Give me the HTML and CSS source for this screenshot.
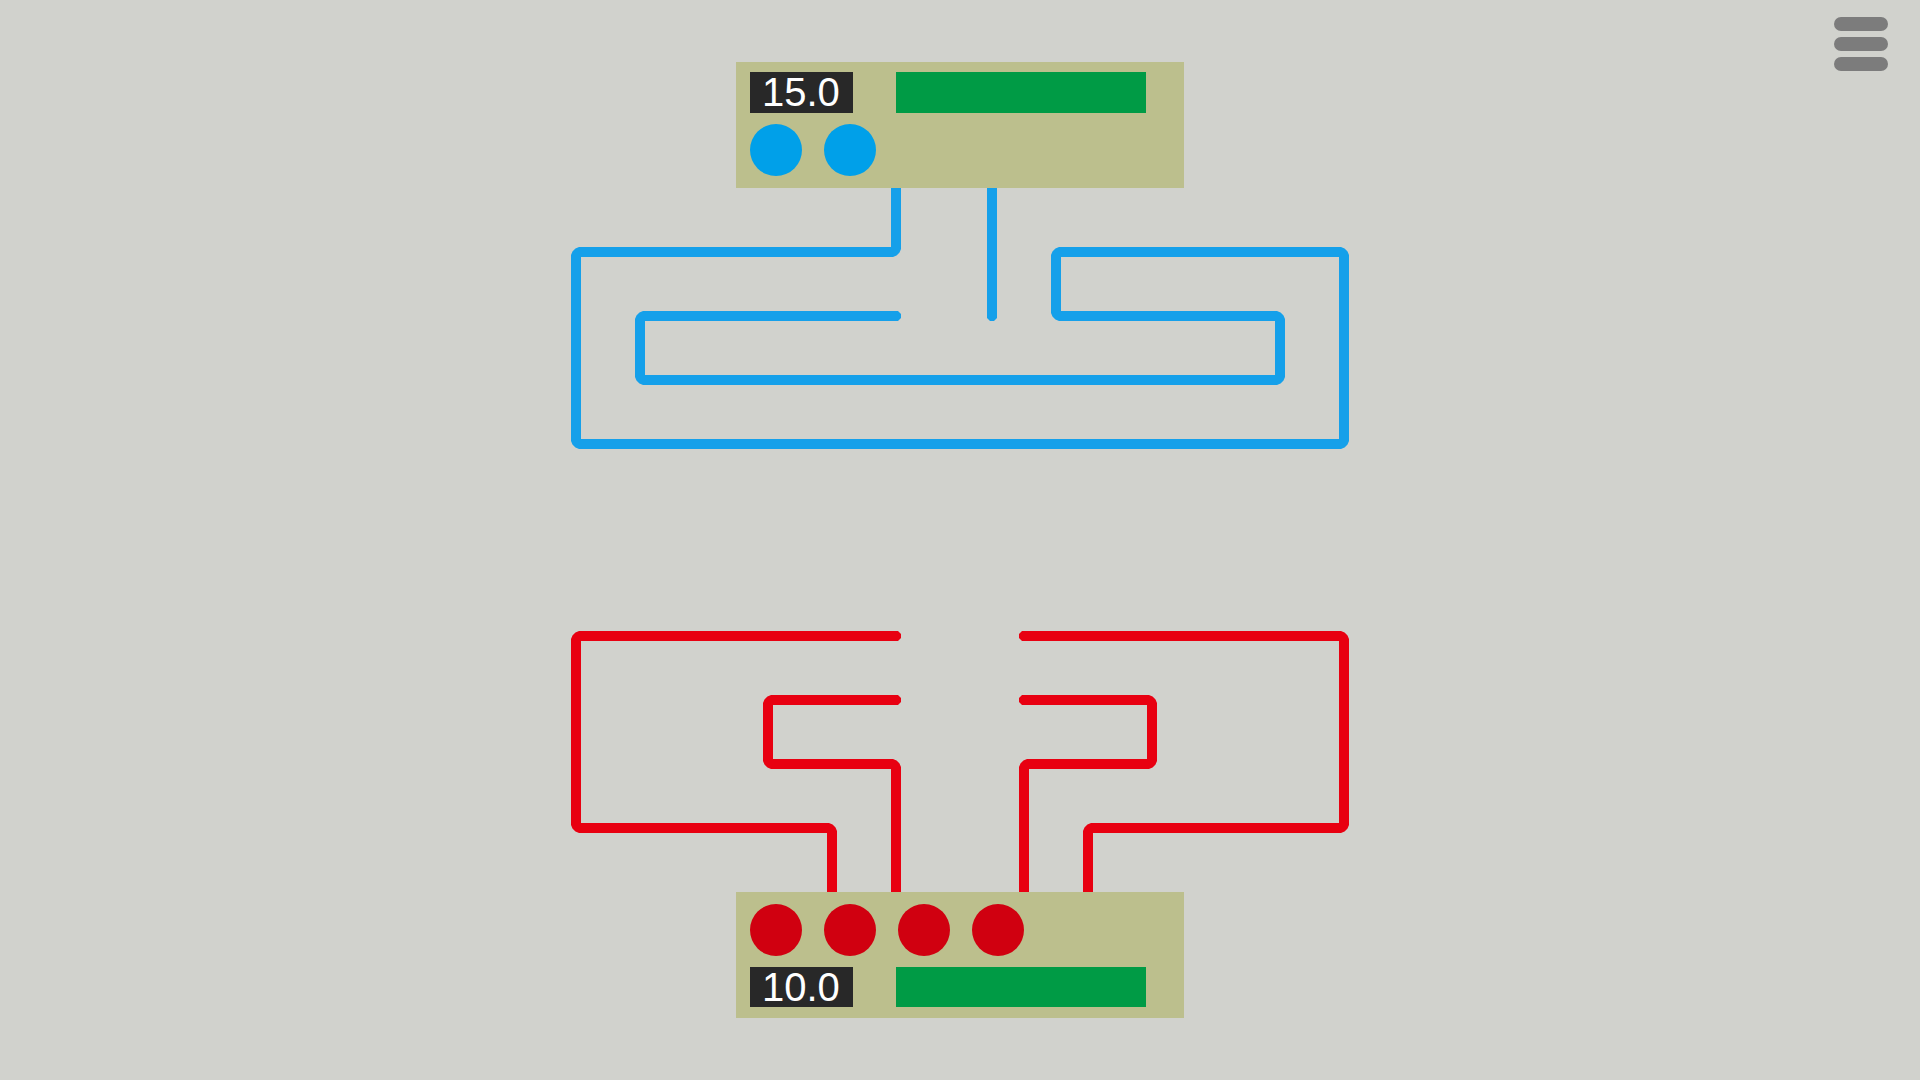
FILE: index.html
```html
<!DOCTYPE html>
<html lang="en">
  <head>
    <meta charset="UTF-8" />
    <meta name="viewport" content="width=device-width, initial-scale=1.0" />
    <title>Line Game</title>
    <link rel="stylesheet" href="styles.css">
  </head>
  <body>
    <button type="button" class="menu-button" aria-label="Menu">
      <span></span>
      <span></span>
      <span></span>
    </button>

    <main class="game">
      <section class="panel panel-blue">
        <div class="status">
          <span class="timer">15.0</span>
          <div class="energy"></div>
        </div>
        <div class="balls">
          <span class="ball"></span>
          <span class="ball"></span>
        </div>
      </section>

      <!-- 64 unit grid, lines are 10 wide -->
      <svg class="board" viewBox="-5 0 778 704">
        <defs>
          <marker id="tip-blue" class="tip-blue" markerUnits="userSpaceOnUse" markerWidth="10" markerHeight="10" viewBox="-5 -5 10 10" orient="auto">
            <path d="M-1 -5 H2 L5 -2 V2 L2 5 H-1 Z" />
          </marker>
          <marker id="tip-red" class="tip-red" markerUnits="userSpaceOnUse" markerWidth="10" markerHeight="10" viewBox="-5 -5 10 10" orient="auto">
            <path d="M-1 -5 H2 L5 -2 V2 L2 5 H-1 Z" />
          </marker>
        </defs>
        <g class="line line-blue">
          <path d="M320 0 V61 L317 64 H3 L0 67 V253 L3 256 H765 L768 253 V67 L765 64 H483 L480 67 V125 L483 128 H701 L704 131 V189 L701 192 H67 L64 189 V131 L67 128 H320" />
          <path d="M416 0 V128" />
        </g>
        <g class="line line-red">
          <path d="M256 704 V643 L253 640 H3 L0 637 V451 L3 448 H320" />
          <path d="M320 704 V579 L317 576 H195 L192 573 V515 L195 512 H320" />
          <path d="M448 704 V579 L451 576 H573 L576 573 V515 L573 512 H448" />
          <path d="M512 704 V643 L515 640 H765 L768 637 V451 L765 448 H448" />
        </g>
      </svg>

      <section class="panel panel-red">
        <div class="balls">
          <span class="ball"></span>
          <span class="ball"></span>
          <span class="ball"></span>
          <span class="ball"></span>
        </div>
        <div class="status">
          <span class="timer">10.0</span>
          <div class="energy"></div>
        </div>
      </section>
    </main>
  </body>
</html>
```
FILE: styles.css
```css
body {
  margin: 0;
  background-color: #d1d2cd;
  font-family: "Liberation Sans", Arial, sans-serif;
}

.game {
  display: flex;
  flex-direction: column;
  align-items: center;
  justify-content: center;
  min-height: 100vh;
}

.panel {
  display: flex;
  flex-direction: column;
  gap: 11px;
  box-sizing: border-box;
  width: 448px;
  max-width: 100%;
  padding: 10px 14px 12px;
  background-color: #bcbf8d;
}

.panel-red {
  padding: 12px 14px 11px;
}

.status {
  display: flex;
  gap: 43px;
}

.timer {
  box-sizing: border-box;
  width: 103px;
  padding-left: 12px;
  background-color: #282828;
  color: #ffffff;
  font-size: 40px;
  line-height: 41px;
}

.panel-red .timer {
  line-height: 40px;
}

.energy {
  width: 250px;
  background-color: #009b45;
}

.balls {
  display: flex;
  gap: 22px;
}

.ball {
  width: 52px;
  height: 52px;
  border-radius: 50%;
}

.panel-blue .ball {
  background-color: #00a0e9;
}

.panel-red .ball {
  background-color: #d00010;
}

.board {
  display: block;
  width: 778px;
  max-width: 100%;
}

.line {
  fill: none;
  stroke-width: 10;
  stroke-linejoin: bevel;
}

.line-blue {
  stroke: #15a0ea;
}

.line-red {
  stroke: #e80011;
}

.line-blue path {
  marker-end: url(#tip-blue);
}

.line-red path {
  marker-end: url(#tip-red);
}

.tip-blue {
  fill: #15a0ea;
}

.tip-red {
  fill: #e80011;
}

.menu-button {
  position: absolute;
  top: 17px;
  right: 32px;
  display: flex;
  flex-direction: column;
  gap: 6px;
  width: 54px;
  padding: 0;
  border: none;
  background: none;
  cursor: pointer;
}

.menu-button span {
  height: 14px;
  border-radius: 7px;
  background-color: #7c7c7c;
}
```
